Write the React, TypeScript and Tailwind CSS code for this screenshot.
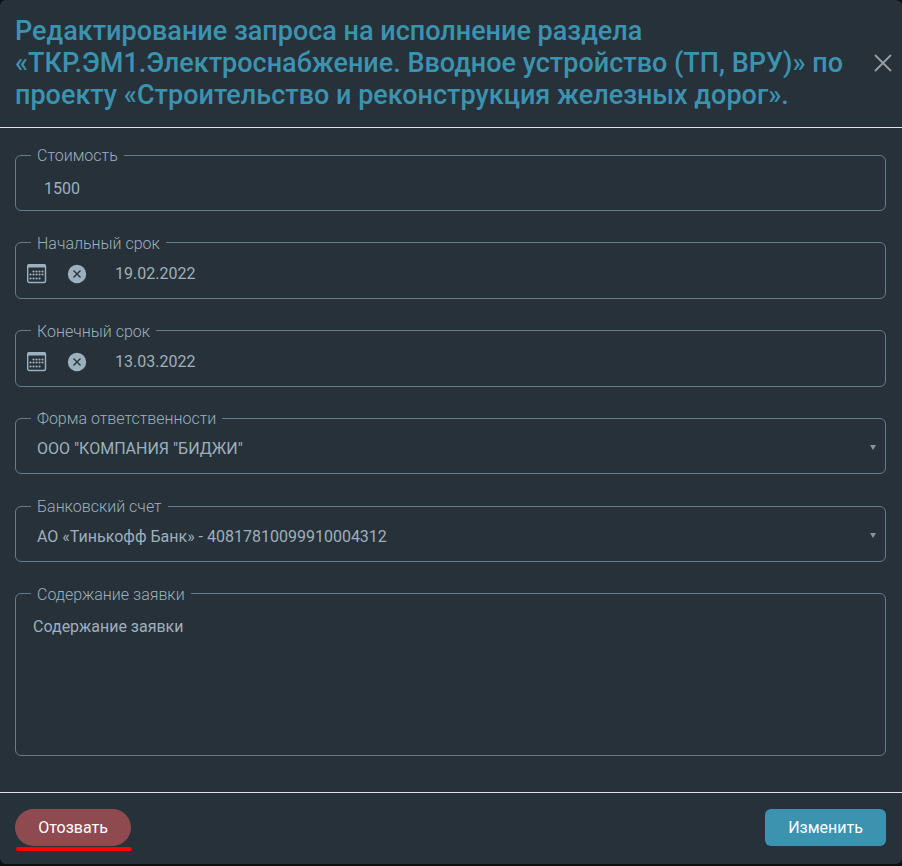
import type { ReactNode } from "react";

const dots: Array<[number, number]> = [
  [7, 7], [10, 7], [13, 7], [16, 7],
  [4, 10], [7, 10], [10, 10], [13, 10], [16, 10],
  [4, 14], [7, 14], [10, 14], [13, 14],
];

function CalendarIcon() {
  return (
    <svg width="20" height="20" viewBox="0 0 20 20" fill="currentColor" aria-hidden="true">
      <rect x="0.700" y="0.700" width="17.800" height="17.800" rx="1.8" fill="none" stroke="currentColor" strokeWidth="1.400" />
      <path d="M0 3.500V2A2 2 0 0 1 2 0h15a2 2 0 0 1 2 2v1.500z" />
      {dots.map(([x, y]) => (
        <circle key={`${x}-${y}`} cx={x - 0.5} cy={y + 0.5} r="1.1" />
      ))}
    </svg>
  );
}

function ClearIcon() {
  return (
    <svg width="20" height="20" viewBox="0 0 20 20" aria-hidden="true">
      <circle cx="10" cy="10" r="9.200" fill="currentColor" />
      <path d="M6.500 6.500l7 7M13.500 6.500l-7 7" stroke="#27313a" strokeWidth="1.4" />
    </svg>
  );
}

const frame = "w-full min-w-0 rounded-md border border-[#667c8a] pl-[15px]";
const caption = "px-1.5 pt-0.5 font-light leading-[22px]";
const control = "min-w-0 flex-1 bg-transparent outline-none";

function Field({ id, label, children }: { id: string; label: string; children: ReactNode }) {
  return (
    <fieldset className={`${frame} h-[68px]`}>
      <legend className={caption}>
        <label htmlFor={id}>{label}</label>
      </legend>
      {children}
    </fieldset>
  );
}

function DateField({ id, label, value }: { id: string; label: string; value: string }) {
  return (
    <Field id={id} label={label}>
      <div className="-ml-1 flex h-[38px] items-center">
        <button type="button" aria-label="Открыть календарь" className="shrink-0">
          <CalendarIcon />
        </button>
        <button type="button" aria-label="Очистить дату" className="ml-5 shrink-0">
          <ClearIcon />
        </button>
        <input id={id} type="text" defaultValue={value} className={`${control} ml-7`} />
      </div>
    </Field>
  );
}

function SelectField({ id, label, value }: { id: string; label: string; value: string }) {
  return (
    <Field id={id} label={label}>
      <div className="relative flex h-[37px] items-center">
        <select id={id} defaultValue={value} className={`${control} appearance-none pl-1.5 pr-8`}>
          <option>{value}</option>
        </select>
        <svg
          className="pointer-events-none absolute right-[9px] top-[15px] text-[#929292]"
          width="6"
          height="5"
          viewBox="0 0 6 5"
          aria-hidden="true"
        >
          <path d="M0 0h6L3 5z" fill="currentColor" />
        </svg>
      </div>
    </Field>
  );
}

export default function App() {
  return (
    <div className="flex min-h-screen flex-col bg-[#0b1014] pb-0.5 font-['Roboto','Liberation_Sans',sans-serif] text-base text-[#9db0bd]">
      <form className="flex flex-1 flex-col rounded-md bg-[#27313a]" onSubmit={(e) => e.preventDefault()}>
        <header className="flex items-center justify-between gap-5 border-b border-[#dee2e6] pb-4 pl-[15px] pr-2.5 pt-[15px]">
          <h1 className="text-[27px] font-medium leading-8 text-[#3c93b0]">
            Редактирование запроса на исполнение раздела «ТКР.ЭМ1.Электроснабжение. Вводное устройство (ТП, ВРУ)» по
            проекту «Строительство и реконструкция железных дорог».
          </h1>
          <button type="button" aria-label="Закрыть" className="shrink-0 text-[#9b9ea0]">
            <svg width="18" height="18" viewBox="0 0 18 18" aria-hidden="true">
              <path d="M1 1l16 16M17 1L1 17" stroke="currentColor" strokeWidth="1.8" fill="none" />
            </svg>
          </button>
        </header>

        <main className="flex flex-1 flex-col justify-between gap-2 pb-9 pl-[15px] pr-4 pt-[15px]">
          <Field id="cost" label="Стоимость">
            <div className="flex h-11 items-center">
              <input id="cost" type="text" defaultValue="1500" className={`${control} pl-[13px]`} />
            </div>
          </Field>
          <DateField id="start" label="Начальный срок" value="19.02.2022" />
          <DateField id="end" label="Конечный срок" value="13.03.2022" />
          <SelectField id="company" label="Форма ответственности" value={'ООО "КОМПАНИЯ "БИДЖИ"'} />
          <SelectField id="account" label="Банковский счет" value="АО «Тинькофф Банк» - 40817810099910004312" />
          <fieldset className={`${frame} h-[174px]`}>
            <legend className={caption}>
              <label htmlFor="content">Содержание заявки</label>
            </legend>
            <textarea
              id="content"
              defaultValue="Содержание заявки"
              className="block h-[140px] w-full resize-none bg-transparent pl-0.5 pt-[9px] leading-6 outline-none"
            />
          </fieldset>
        </main>

        <footer className="flex items-start justify-between border-t border-[#dee2e6] pb-[18px] pl-[15px] pr-4 pt-4 text-white">
          <div className="relative">
            <button type="button" className="h-[37px] w-[116px] rounded-full bg-[#8f4a50]">
              Отозвать
            </button>
            <span className="absolute left-px top-[38px] h-1 w-[116px] rounded-full bg-[#fe0000]" />
          </div>
          <button type="submit" className="h-[37px] w-[121px] rounded-md bg-[#3c93b0]">
            Изменить
          </button>
        </footer>
      </form>
    </div>
  );
}
